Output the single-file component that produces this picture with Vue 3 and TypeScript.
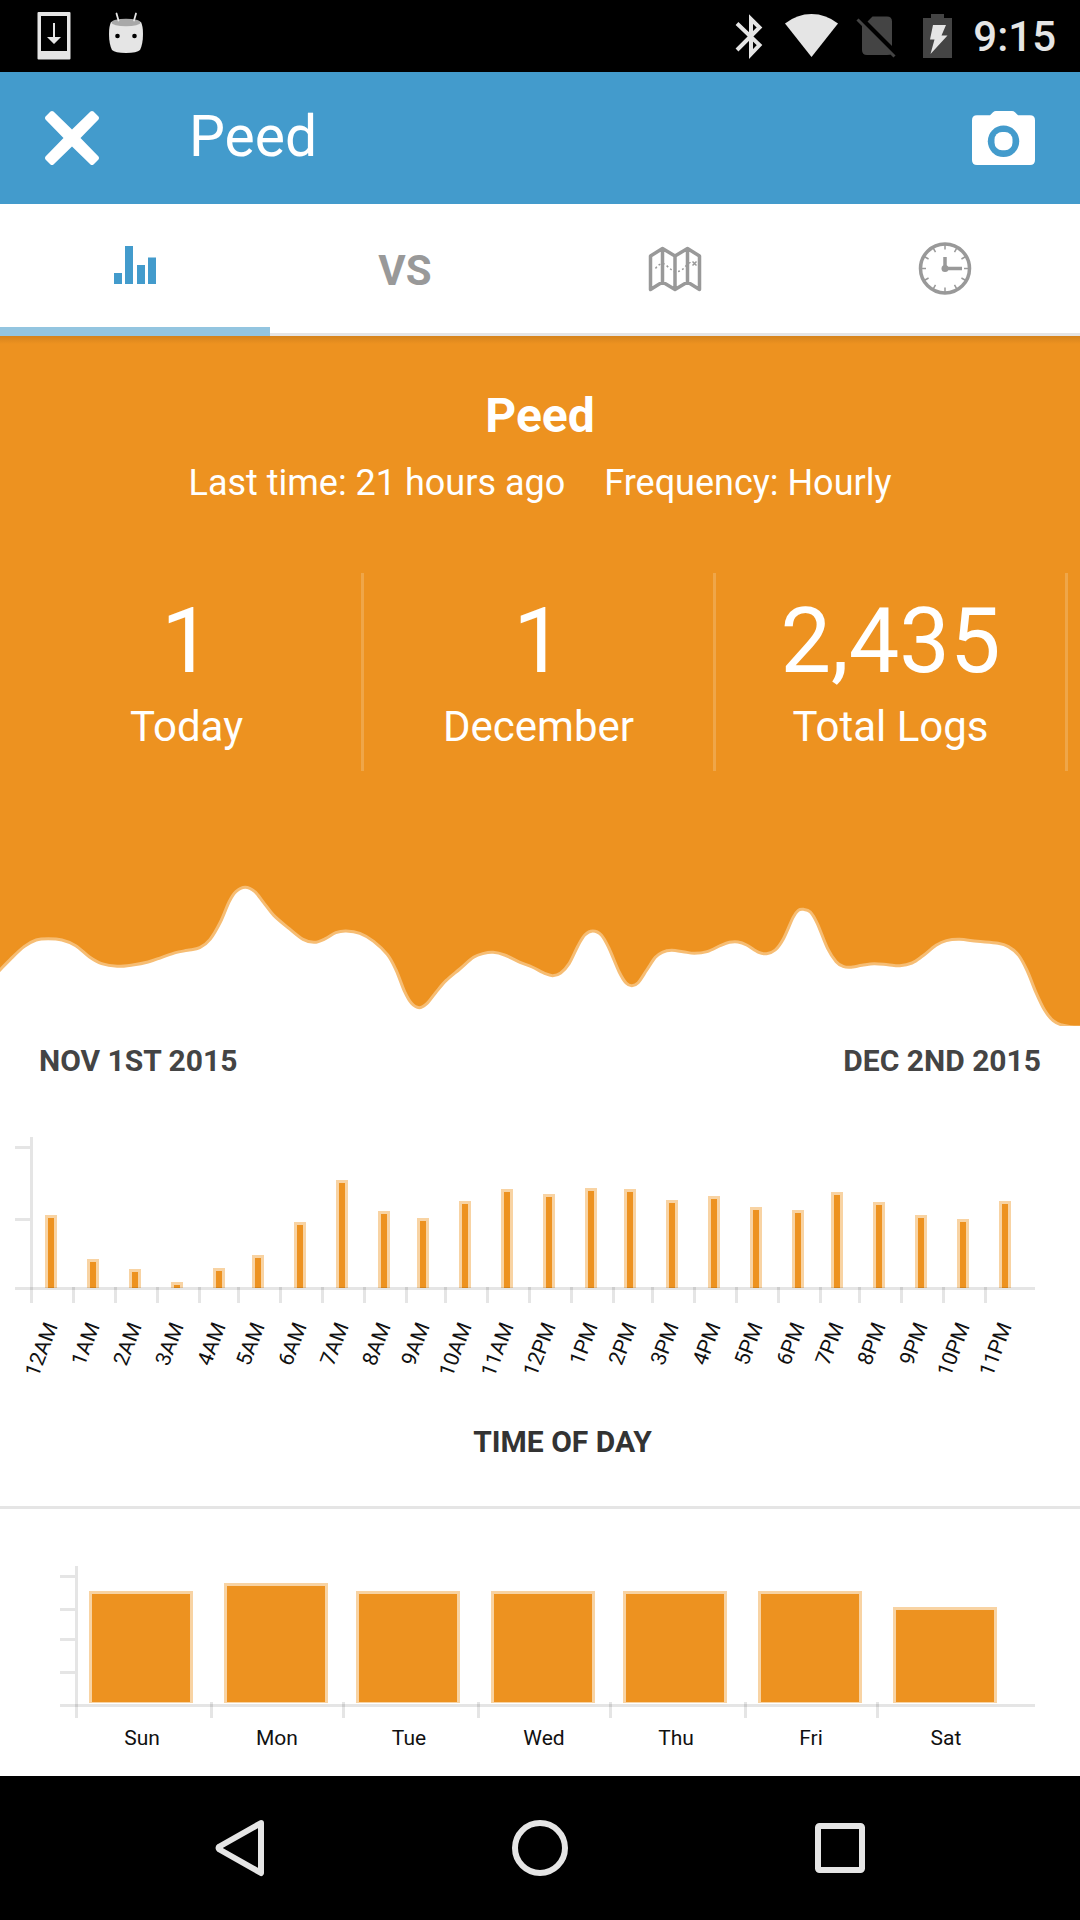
<script setup lang="ts">
interface Bar {
  label: string
  x: number
  top: number
}

// Control points of the daily trend, in the trend view box (3136 x 468)
const trend: [number, number][] = [
  [-20, 322], [0, 300], [30, 268], [70, 230], [105, 210], [140, 206], [180, 210], [220, 227], [260, 261], [295, 281],
  [340, 289], [385, 285], [430, 276], [470, 262], [510, 248], [545, 241], [580, 233], [610, 208], [640, 156],
  [665, 96], [685, 65], [712, 52], [740, 65], [765, 97], [795, 136], [840, 176], [880, 208], [913, 217],
  [945, 206], [975, 188], [1005, 183], [1045, 190], [1085, 214], [1125, 254], [1150, 300], [1175, 365],
  [1195, 400], [1217, 413], [1240, 400], [1265, 368], [1295, 332], [1335, 297], [1375, 262], [1405, 250],
  [1432, 247], [1465, 255], [1510, 277], [1545, 291], [1583, 311], [1605, 317], [1628, 309], [1653, 280],
  [1678, 228], [1698, 195], [1721, 183], [1746, 195], [1768, 234], [1798, 306], [1818, 339], [1835, 347],
  [1853, 338], [1878, 300], [1903, 262], [1923, 247], [1950, 241], [1983, 245], [2016, 250], [2053, 245],
  [2093, 226], [2118, 217], [2143, 216], [2168, 225], [2203, 247], [2226, 251], [2251, 240], [2275, 206],
  [2303, 142], [2318, 121], [2333, 118], [2353, 126], [2373, 160], [2403, 235], [2428, 275], [2448, 289],
  [2468, 292], [2503, 286], [2538, 281], [2578, 284], [2613, 287], [2648, 279], [2678, 259], [2718, 226],
  [2748, 212], [2786, 208], [2838, 214], [2898, 220], [2928, 230], [2958, 256], [2983, 303], [3008, 367],
  [3033, 420], [3058, 452], [3083, 465], [3110, 470], [3136, 471],
]

function smooth(points: [number, number][]): string {
  let d = `M${points[0][0]},${points[0][1]}`
  for (let i = 0; i < points.length - 1; i++) {
    const p0 = points[Math.max(i - 1, 0)]
    const p1 = points[i]
    const p2 = points[i + 1]
    const p3 = points[Math.min(i + 2, points.length - 1)]
    d += `C${p1[0] + (p2[0] - p0[0]) / 6},${p1[1] + (p2[1] - p0[1]) / 6}`
    d += ` ${p2[0] - (p3[0] - p1[0]) / 6},${p2[1] - (p3[1] - p1[1]) / 6} ${p2[0]},${p2[1]}`
  }
  return d
}

const trendLine = smooth(trend)
const trendArea = `${trendLine}V480H-20Z`

const stats = [
  { value: '1', label: 'Today' },
  { value: '1', label: 'December' },
  { value: '2,435', label: 'Total Logs' },
]

const hourX = [45, 87, 129, 171, 213, 252, 294, 336, 378, 417, 459, 501, 543, 585, 624, 666, 708, 750, 792, 831, 873, 915, 957, 999]
const hourTop = [95, 139, 149, 162, 148, 135, 102, 60, 91, 98, 81, 69, 74, 68, 69, 80, 76, 87, 90, 72, 82, 95, 99, 81]
const hourTicks = [72, 114, 156, 198, 237, 279, 321, 363, 405, 444, 486, 528, 570, 612, 651, 693, 735, 777, 819, 858, 900, 942, 984]
const hours: Bar[] = hourX.map((x, i) => ({
  label: `${i % 12 || 12}${i < 12 ? 'AM' : 'PM'}`,
  x,
  top: hourTop[i],
}))

const days: Bar[] = [
  { label: 'Sun', x: 89, top: 82 },
  { label: 'Mon', x: 224, top: 74 },
  { label: 'Tue', x: 356, top: 82 },
  { label: 'Wed', x: 491, top: 82 },
  { label: 'Thu', x: 623, top: 82 },
  { label: 'Fri', x: 758, top: 82 },
  { label: 'Sat', x: 893, top: 98 },
]
const dayTicks = [210, 342, 477, 609, 744, 876]

const clockTicks = Array.from({ length: 12 }, (_, i) => i * 30)
</script>

<template>
  <div class="screen">
    <div class="status">
      <div class="status-left">
        <svg width="34" height="72" viewBox="37 0 34 72" aria-hidden="true">
          <path fill="#e5e5e5" fill-rule="evenodd" d="M38.500 12h31a1 1 0 0 1 1 1v45.500a1 1 0 0 1-1 1h-31a1 1 0 0 1-1-1V13a1 1 0 0 1 1-1zM41 16v35h26V16z" />
          <path fill="#e5e5e5" d="M53 23h2v14h6l-7 7-7-7h6z" />
        </svg>
        <svg width="36" height="72" viewBox="108 0 36 72" aria-hidden="true">
          <path fill="#e5e5e5" d="M111 22q15-5 30 0 2 4 2 12 0 10-3 16-3 3-14 3t-14-3q-3-6-3-16 0-8 2-12z" />
          <ellipse cx="126" cy="22.500" rx="14.500" ry="3.800" fill="#a8a8a8" />
          <path stroke="#e5e5e5" stroke-width="1.800" stroke-linecap="round" d="M116.500 13.500l2 7M136 13.500l-2 7" />
          <circle cx="117.500" cy="36" r="2.300" />
          <circle cx="134.500" cy="36" r="2.300" />
        </svg>
      </div>
      <div class="status-right">
        <svg width="28" height="72" viewBox="735 0 28 72" aria-hidden="true">
          <path fill="none" stroke="#e5e5e5" stroke-width="4" d="M737 23.500l22.500 21.500-8.500 9V19l8.500 8.500L737 50" />
        </svg>
        <svg width="54" height="72" viewBox="785 0 54 72" aria-hidden="true">
          <path fill="#e5e5e5" d="M785 23.500Q797 14 811.500 14T838 23.500L811.500 57z" />
        </svg>
        <svg class="sim" width="40" height="72" viewBox="861 0 40 72" aria-hidden="true">
          <path fill="#444" d="M867.500 21.500l5-5H887q5 0 5 5V46zM862 25l29.500 29q-1 1-4.500 1h-20q-5 0-5-5z" />
          <path stroke="#444" stroke-width="3" d="M857.500 19.500L894.500 56.500" />
        </svg>
        <svg width="30" height="72" viewBox="923 0 30 72" aria-hidden="true">
          <path fill="#444" d="M931 14h13v4h8v40h-29V18h8z" />
          <path fill="#e5e5e5" d="M933 25h13l-4.500 10.500h6L930.500 54l4-14.500H930z" />
        </svg>
        <time class="clock">9:15</time>
      </div>
    </div>

    <header class="bar">
      <button class="icon-button" type="button" aria-label="Close">
        <svg width="54" height="54" viewBox="45 111 54 54">
          <path fill="#fff" d="M50.500 111.500q1.500-1 3 0L72 129.500l18.500-18q1.500-1 3 0l5 5q1 1.500 0 3L80.500 138l18 18.500q1 1.500 0 3l-5 5q-1.500 1-3 0L72 146.500l-18.500 18q-1.500 1-3 0l-5-5q-1-1.500 0-3l18-18.500-18-18.500q-1-1.500 0-3z" />
        </svg>
      </button>
      <h1 class="bar-title">Peed</h1>
      <button class="icon-button" type="button" aria-label="Camera">
        <svg width="63" height="54" viewBox="972 111 63 54">
          <path fill="#fff" d="M977 115.300h13l3-3q1.300-1.300 3-1.300h16q1.700 0 3 1.300l3 3h12q5 0 5 5V160q0 5-5 5h-53q-5 0-5-5v-39.700q0-5 5-5z" />
          <circle cx="1003.500" cy="141.300" r="15.700" fill="#439bcc" />
          <rect x="994.500" y="132" width="18" height="18.300" rx="7.500" fill="#fff" />
        </svg>
      </button>
    </header>

    <nav class="tabs" aria-label="Views">
      <button class="tab active" type="button" aria-label="Statistics">
        <svg width="42" height="40" viewBox="114 246 42 40">
          <path fill="#439bcc" d="M114 273h8v11h-8zM125 246h8v38h-8zM137 265h8v19h-8zM148 257.500h8V284h-8z" />
        </svg>
      </button>
      <button class="tab" type="button"><span class="tab-text">VS</span></button>
      <button class="tab" type="button" aria-label="Map">
        <svg width="54" height="46" viewBox="648 245.500 54 46">
          <g fill="none" stroke="#999" stroke-linejoin="round">
            <path stroke-width="3.500" d="M650.500 255.500l12-7.500 12.500 7.500 12.500-7.500 12 7.500v33.500l-12-7.500-12.500 7.500-12.500-7.500-12 7.500zM662.500 248v33.500M675 255.500V289M687.500 248v33.500" />
            <path stroke-width="1.500" stroke-dasharray="2 2.500" d="M655.500 268q6-8 11-3t9 6.500q6-.5 10-5.500t5-3.500" />
            <path stroke-width="1.500" d="M692.500 261l4 4m0-4l-4 4" />
          </g>
        </svg>
      </button>
      <button class="tab" type="button" aria-label="History">
        <svg width="54" height="54" viewBox="-27 -26.500 54 54">
          <circle r="24.500" fill="none" stroke="#999" stroke-width="3.500" />
          <path v-for="a in clockTicks" :key="a" stroke="#999" stroke-width="1.500" d="M0-24v5" :transform="`rotate(${a})`" />
          <circle r="3.500" fill="#999" />
          <path fill="none" stroke="#999" stroke-width="3.500" d="M0-11.500V0h17" />
        </svg>
      </button>
    </nav>

    <section class="hero">
      <h2 class="hero-title">Peed</h2>
      <p class="hero-meta"><span>Last time: 21 hours ago</span><span>Frequency: Hourly</span></p>
      <dl class="stats">
        <div v-for="s in stats" :key="s.label" class="stat">
          <dd class="stat-value">{{ s.value }}</dd>
          <dt class="stat-label">{{ s.label }}</dt>
        </div>
      </dl>
      <svg class="trend" viewBox="0 0 3136 468" preserveAspectRatio="none" role="img" aria-label="Logs per day">
        <path :d="trendArea" fill="#fff" />
        <path :d="trendLine" fill="none" stroke="#f6bd74" stroke-width="3" vector-effect="non-scaling-stroke" />
      </svg>
    </section>

    <div class="range">
      <span>NOV 1ST 2015</span>
      <span>DEC 2ND 2015</span>
    </div>

    <figure class="panel">
      <svg class="chart" viewBox="0 0 1080 270" role="img" aria-label="Logs by time of day">
        <g v-for="b in hours" :key="b.label">
          <rect :x="b.x" :y="b.top" width="12" :height="168 - b.top" fill="#f8d3a3" />
          <rect :x="b.x + 3" :y="b.top + 3" width="6" :height="165 - b.top" fill="#ed9220" />
          <text class="axis-label" text-anchor="end" :transform="`translate(${b.x + 13} 206) rotate(-69)`">{{ b.label }}</text>
        </g>
        <g fill="#000" fill-opacity="0.1">
          <rect x="30" y="17" width="3" height="166" />
          <rect x="15" y="26" width="15" height="3" />
          <rect x="15" y="98" width="15" height="3" />
          <rect x="15" y="167" width="1020" height="3" />
          <rect v-for="t in hourTicks" :key="t" :x="t" y="167" width="3" height="16" />
        </g>
      </svg>
      <figcaption class="caption">TIME OF DAY</figcaption>
    </figure>

    <figure class="panel">
      <svg class="chart" viewBox="0 0 1080 267" role="img" aria-label="Logs by weekday">
        <g v-for="b in days" :key="b.label">
          <rect :x="b.x" :y="b.top" width="104" :height="194 - b.top" fill="#f8d3a3" />
          <rect :x="b.x + 3" :y="b.top + 3" width="98" :height="190 - b.top" fill="#ed9220" />
          <text class="axis-label" text-anchor="middle" :x="b.x + 53" y="236">{{ b.label }}</text>
        </g>
        <g fill="#000" fill-opacity="0.1">
          <rect x="75" y="57" width="3" height="152" />
          <rect x="60" y="66" width="15" height="3" />
          <rect x="60" y="99" width="15" height="3" />
          <rect x="60" y="129" width="15" height="3" />
          <rect x="60" y="162" width="15" height="3" />
          <rect x="60" y="195" width="975" height="3" />
          <rect v-for="t in dayTicks" :key="t" :x="t" y="193" width="3" height="16" />
        </g>
      </svg>
    </figure>

    <nav class="system" aria-label="System">
      <button type="button" aria-label="Back">
        <svg width="60" height="60" viewBox="-30 -30 60 60">
          <path fill="none" stroke="#e5e5e5" stroke-width="6" stroke-linejoin="round" d="M21-25L-20.500-1.500q-2 1.500 0 3L21 25z" />
        </svg>
      </button>
      <button type="button" aria-label="Home">
        <svg width="60" height="60" viewBox="-30 -30 60 60">
          <circle r="25" fill="none" stroke="#e5e5e5" stroke-width="6" />
        </svg>
      </button>
      <button type="button" aria-label="Recent apps">
        <svg width="60" height="60" viewBox="-30 -30 60 60">
          <rect x="-22" y="-22" width="44" height="44" rx="1.500" fill="none" stroke="#e5e5e5" stroke-width="6" />
        </svg>
      </button>
    </nav>
  </div>
</template>

<style>
body {
  margin: 0;
  background: #fff;
}
</style>

<style scoped>
.screen {
  display: flex;
  flex-direction: column;
  min-height: 100vh;
  background: #fff;
  font-family: Roboto, sans-serif;
}

button {
  margin: 0;
  padding: 0;
  border: 0;
  background: none;
  font: inherit;
  color: inherit;
}

svg {
  display: block;
}

.status {
  display: flex;
  justify-content: space-between;
  height: 72px;
  padding: 0 24px 0 37px;
  background: #000;
}

.status-left {
  display: flex;
  gap: 37px;
}

.status-right {
  display: flex;
  align-items: center;
  gap: 22px;
}

.sim {
  overflow: visible;
}

.clock {
  margin-left: -2px;
  padding-top: 2px;
  font-size: 42px;
  line-height: 48px;
  font-weight: 500;
  color: #e5e5e5;
}

.bar {
  display: flex;
  align-items: center;
  height: 132px;
  padding: 0 45px;
  background: #439bcc;
  color: #fff;
}

.bar-title {
  flex: 1;
  margin: 0 0 2px 90px;
  font-size: 57px;
  line-height: 64px;
  font-weight: 400;
}

.tabs {
  display: grid;
  grid-template-columns: repeat(4, 1fr);
  height: 132px;
}

.tab {
  display: flex;
  align-items: center;
  justify-content: center;
  border-bottom: 3px solid #e5e5e5;
  font-size: 42px;
  line-height: 48px;
  font-weight: 700;
  color: #999;
}

.tab-text {
  padding-top: 4px;
}

.tab.active {
  border-bottom: 9px solid #93c5e0;
}

.hero {
  background: linear-gradient(rgba(0, 0, 0, 0.1), rgba(0, 0, 0, 0) 8px) #ed9220;
  color: #fff;
  text-align: center;
}

.hero-title {
  margin: 0;
  padding-top: 52px;
  font-size: 48px;
  line-height: 56px;
  font-weight: 700;
}

.hero-meta {
  display: flex;
  justify-content: center;
  gap: 39px;
  margin: 18px 0 69px;
  font-size: 36px;
  line-height: 42px;
}

.stats {
  display: grid;
  grid-template-columns: repeat(3, 1fr);
  margin: 0;
  padding: 0 12px 99px;
}

.stat {
  padding: 15px 0 20px;
  border-right: 3px solid #efa649;
}

.stat-value {
  margin: 0 0 7px;
  font-size: 90px;
  line-height: 108px;
}

.stat-label {
  font-size: 42px;
  line-height: 48px;
}

.trend {
  width: 100%;
  height: 156px;
}

.range {
  display: flex;
  justify-content: space-between;
  padding: 17px 39px 41px;
  font-size: 30px;
  line-height: 36px;
  font-weight: 700;
  color: #444;
}

.panel {
  margin: 0;
}

.panel + .panel {
  border-top: 3px solid #e5e5e5;
}

.chart {
  width: 100%;
  height: auto;
}

.axis-label {
  font-size: 21px;
  fill: #111;
}

.caption {
  padding: 34px 0 46px 45px;
  font-size: 30px;
  line-height: 36px;
  font-weight: 700;
  color: #333;
  text-align: center;
}

.system {
  display: grid;
  grid-template-columns: repeat(3, 1fr);
  height: 144px;
  margin-top: auto;
  padding: 0 90px;
  background: #000;
}

.system button {
  display: flex;
  align-items: center;
  justify-content: center;
}
</style>
